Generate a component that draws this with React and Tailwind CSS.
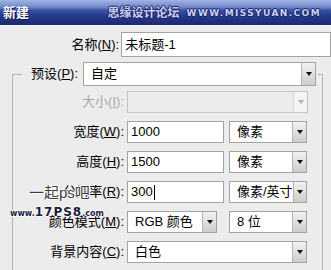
import React from 'react';

const font = { fontFamily: '"Liberation Sans", "Noto Sans CJK SC", sans-serif' };

function Arrow({ disabled }) {
    return (
        <div className={`w-[14px] h-full flex items-center justify-center border-l ${disabled ? 'border-[#d6d6d6] bg-[#f4f4f4]' : 'border-[#b4b4b4] bg-gradient-to-b from-[#f2f2f2] to-[#cdcdcd]'}`}>
            <div className={`w-0 h-0 border-l-[3.5px] border-r-[3.5px] border-t-[4px] border-l-transparent border-r-transparent ${disabled ? 'border-t-[#b0b0b0]' : 'border-t-[#111]'}`} />
        </div>
    );
}

function Select({ value, className = '', disabled }) {
    return (
        <div className={`flex h-full border ${disabled ? 'border-[#c4c4c4] bg-[#ececec]' : 'border-[#a3a3a3] bg-white'} ${className}`}>
            <div className="flex-1 pl-[7px] flex items-center text-[13px] text-black whitespace-nowrap">{value}</div>
            <Arrow disabled={disabled} />
        </div>
    );
}

function Input({ value, className = '', caret }) {
    return (
        <div className={`h-full border border-[#a3a3a3] bg-white pl-[3px] flex items-center text-[13px] text-black ${className}`}>
            {value}
            {caret && <span className="inline-block w-px h-[15px] bg-black ml-px" />}
        </div>
    );
}

function Label({ text, u, disabled }) {
    return (
        <div className={`w-[102px] text-right text-[13px] whitespace-nowrap ${disabled ? 'text-[#a9a9a9]' : 'text-black'}`}>
            {text}(<span className="underline">{u}</span>):
        </div>
    );
}

function Row({ children }) {
    return <div className="flex items-center h-[22px] gap-[3px]">{children}</div>;
}

export default function App() {
    return (
        <div className="relative w-[331px] h-[270px] overflow-hidden bg-[#ececec]" style={font}>
            {/* title bar */}
            <div className="h-[26px] flex items-center justify-between pl-[3px] pr-[10px] bg-[linear-gradient(180deg,#a3b4e2_0%,#7088cb_28%,#3a4f9f_42%,#27398b_65%,#1c2972_100%)] border-b border-[#f6f6f6]">
                <span className="text-white font-bold text-[13px] [text-shadow:1px_1px_0_#0d1540]">新建</span>
                <div className="flex items-end gap-[7px] text-[#c9d2f6] [text-shadow:1px_0_0_#1a2466,-1px_0_0_#1a2466,0_1px_0_#1a2466,0_-1px_0_#1a2466]">
                    <span className="text-[12px] font-bold leading-none">思缘设计论坛</span>
                    <span className="text-[9px] font-bold leading-none tracking-[1.4px] pb-[1px]" style={{ fontFamily: '"DejaVu Sans", sans-serif' }}>WWW.MISSYUAN.COM</span>
                </div>
            </div>

            {/* name */}
            <div className="flex items-center h-[25px] gap-[2px] mt-[6px]">
                <div className="w-[125px] text-right text-[13px] text-black whitespace-nowrap">
                    名称(<span className="underline">N</span>):
                </div>
                <Input value="未标题-1" className="w-[220px] h-[25px]" />
            </div>

            <fieldset className="ml-[12px] mt-[5px] w-[311px] border border-[#b3b3b3] pl-[9px] pb-[30px]">
                <legend className="flex items-center h-[24px] gap-[5px] pr-[2px]">
                    <div className="w-[56px] text-right text-[13px] text-black whitespace-nowrap">
                        预设(<span className="underline">P</span>):
                    </div>
                    <Select value="自定" className="w-[233px]" />
                </legend>

                <div className="flex flex-col gap-[8px] mt-[5px]">
                    <Row>
                        <Label text="大小" u="I" disabled />
                        <Select value="" disabled className="w-[181px]" />
                    </Row>
                    <Row>
                        <Label text="宽度" u="W" />
                        <Input value="1000" className="w-[97px]" />
                        <Select value="像素" className="w-[78px] ml-[2px]" />
                    </Row>
                    <Row>
                        <Label text="高度" u="H" />
                        <Input value="1500" className="w-[97px]" />
                        <Select value="像素" className="w-[78px] ml-[2px]" />
                    </Row>
                    <Row>
                        <Label text="分辨率" u="R" />
                        <Input value="300" caret className="w-[97px]" />
                        <Select value="像素/英寸" className="w-[78px] ml-[2px]" />
                    </Row>
                    <Row>
                        <Label text="颜色模式" u="M" />
                        <Select value="RGB 颜色" className="w-[90px]" />
                        <Select value="8 位" className="w-[78px] ml-[9px]" />
                    </Row>
                    <Row>
                        <Label text="背景内容" u="C" />
                        <Select value="白色" className="w-[180px]" />
                    </Row>
                </div>
            </fieldset>

            {/* watermark overlay */}
            <div className="absolute left-[29px] top-[185px] text-[15px] leading-none text-[#3a3a3a] [text-shadow:1px_0_0_#fff,-1px_0_0_#fff,0_1px_0_#fff,0_-1px_0_#fff]">
                一起ps吧
            </div>
            <div className="absolute left-[10px] top-[206px] flex items-end leading-none font-black text-[#1b1b3d] [text-shadow:1px_0_0_#fff,-1px_0_0_#fff,0_1px_0_#fff,0_-1px_0_#fff]" style={{ fontFamily: '"DejaVu Sans", sans-serif' }}>
                <span className="text-[8px]">www.</span>
                <span className="text-[12px] tracking-[1px]">17PS8</span>
                <span className="text-[8px]">.com</span>
            </div>
        </div>
    );
}
